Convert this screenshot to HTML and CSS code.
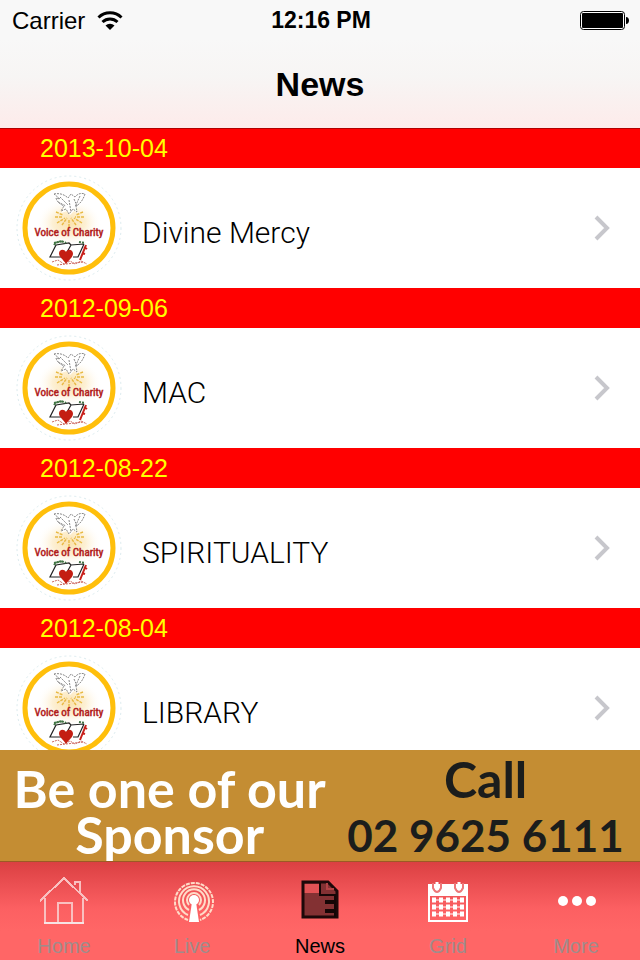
FILE: index.html
```html
<!DOCTYPE html>
<html lang="en">
<head>
<meta charset="utf-8">
<meta name="viewport" content="width=device-width, initial-scale=1">
<title>News</title>
<link rel="stylesheet" href="styles.css">
</head>
<body>
<svg class="defs" aria-hidden="true">
  <defs>
    <radialGradient id="glow">
      <stop offset="0" stop-color="#fbe2ac"/>
      <stop offset="0.5" stop-color="#fdf0d4"/>
      <stop offset="1" stop-color="#fff" stop-opacity="0"/>
    </radialGradient>
    <symbol id="logo" viewBox="0 -1 110 110">
      <circle cx="53" cy="54" r="52" fill="none" stroke="#dcecef" stroke-dasharray="2 3"/>
      <circle cx="53" cy="54" r="44" fill="#fff" stroke="#ffbf0b" stroke-width="5"/>
      <ellipse cx="53" cy="49" rx="33" ry="24" fill="url(#glow)"/>
      <g fill="none" stroke="#e8b943" stroke-width="1.4" stroke-dasharray="3 1">
        <path d="M40 38 47 41M39 43 47 43M41 49 49 44M46 51 51 44M53 53V45M60 51 55 44M66 49 58 44M68 43 59 43M67 38 60 41"/>
      </g>
      <path d="M39 20c4-1 9 1 13 4l4-4 4 2c3-3 8-3 10 0-2 7-5 10-10 12l2 5-4-2-4 4-3-4-6 2 3-5c-5-2-8-5-9-14z" fill="#fff"/>
      <path d="M38 20c5-1 10 0 14 4l3-4 4 3c3-4 7-4 10-3-2 6-5 10-9 12l1 6-4-3-4 5-3-5-5 2 3-5c-4-2-7-4-8-8l4 1-6-5M44 23l8 8M42 28l8 4M58 25l3 7M64 22l-5 11M53 26l2 12" fill="none" stroke="#888" stroke-width="1" stroke-dasharray="2 1"/>
      <path d="M40 71 53 69 55 71 68 70 61 85 37 85 34 83z" fill="#fff"/>
      <path d="M40 71 53 69 55 71 68 70M40 71 34 83 47 83M55 71 50 80M68 70 62 83H57" fill="none" stroke="#222" stroke-width="1.2"/>
      <path d="M70 71 64 86M68 73l3 2M66 79l3 1" fill="none" stroke="#c8201b" stroke-width="2"/>
      <path d="M38 71c4-5 9-4 12-2M38 69l9-2M63 68l6 1" fill="none" stroke="#417445" stroke-width="2" stroke-dasharray="2 1"/>
      <path d="M36 88 42 86 48 90 54 87 59 90 65 87 71 90M41 91 68 88" fill="none" stroke="#cc6760" stroke-dasharray="2 1"/>
      <path d="M50 90C47 85 43 83 43 79.500c0-4 5-5 7-1.500 2-4 7-2 7 1.500 0 4-4 6-7 10.500z" fill="#c41e13"/>
      <text class="logo-text" x="53" y="62" text-anchor="middle">Voice of Charity</text>
    </symbol>
    <symbol id="chevron" viewBox="0 0 18 26">
      <path d="M2 2 13 13 2 24" fill="none" stroke="#c7c7cc" stroke-width="4"/>
    </symbol>
  </defs>
</svg>

<header class="top">
  <div class="status">
    <span class="carrier">Carrier
      <svg class="wifi" viewBox="0 0 26 20" aria-hidden="true">
        <path d="M1.500 6.500a16.500 16.500 0 0 1 23 0" fill="none" stroke="#000" stroke-width="3"/>
        <path d="M5.500 11a11 11 0 0 1 15 0" fill="none" stroke="#000" stroke-width="3"/>
        <path d="M8.500 14.500a6.500 6.500 0 0 1 9 0L13 19z"/>
      </svg>
    </span>
    <span class="time">12:16 PM</span>
    <svg class="battery" viewBox="0 0 50 20" aria-hidden="true">
      <rect x="0.500" y="0.500" width="44" height="18" rx="3" fill="#fff" stroke="#000"/>
      <rect x="2" y="2" width="41" height="15" rx="1"/>
      <path d="M46 6c4 0 4 7 0 7z"/>
    </svg>
  </div>
  <h1 class="title">News</h1>
</header>

<main class="list">
  <section>
    <h2 class="date">2013-10-04</h2>
    <a class="row" href="#divine-mercy"><svg class="logo" aria-hidden="true"><use href="#logo"/></svg><span class="name">Divine Mercy</span><svg class="chevron" aria-hidden="true"><use href="#chevron"/></svg></a>
  </section>
  <section>
    <h2 class="date">2012-09-06</h2>
    <a class="row" href="#mac"><svg class="logo" aria-hidden="true"><use href="#logo"/></svg><span class="name">MAC</span><svg class="chevron" aria-hidden="true"><use href="#chevron"/></svg></a>
  </section>
  <section>
    <h2 class="date">2012-08-22</h2>
    <a class="row" href="#spirituality"><svg class="logo" aria-hidden="true"><use href="#logo"/></svg><span class="name">SPIRITUALITY</span><svg class="chevron" aria-hidden="true"><use href="#chevron"/></svg></a>
  </section>
  <section>
    <h2 class="date">2012-08-04</h2>
    <a class="row" href="#library"><svg class="logo" aria-hidden="true"><use href="#logo"/></svg><span class="name">LIBRARY</span><svg class="chevron" aria-hidden="true"><use href="#chevron"/></svg></a>
  </section>
</main>

<a class="banner" href="tel:0296256111">
  <span class="pitch">Be one of our<br>Sponsor</span>
  <span class="call"><span class="verb">Call</span><span class="number">02 9625 6111</span></span>
</a>

<nav class="tabs">
  <a class="tab" href="#home">
    <svg class="icon" viewBox="0 0 50 50" aria-hidden="true">
      <g fill="none" stroke="#f9c0c0" stroke-width="2" shape-rendering="crispEdges">
        <path d="M1 26 25 3 49 26M6 23V47M44 23V47M19 47V28H33V47M36 10V7H41V17"/>
        <path d="M5 48H45" stroke="#f6e4e4"/>
      </g>
    </svg>
    Home
  </a>
  <a class="tab" href="#live">
    <svg class="icon" viewBox="-2 1 50 50" aria-hidden="true">
      <g fill="none" stroke="#ffdcc8" stroke-width="2">
        <path d="M19 46A19 19 0 1 1 31 46" stroke-dasharray="4 1"/>
        <path d="M19 41A15 15 0 1 1 31 41"/>
        <path d="M20 36A11 11 0 1 1 30 36"/>
        <path d="M20 31A7 7 0 1 1 30 31"/>
      </g>
      <circle cx="25" cy="26" r="5" fill="#fff"/>
      <path d="M23 28H27L30 48H20z" fill="#fff"/>
    </svg>
    Live
  </a>
  <a class="tab current" href="#news" aria-current="page">
    <svg class="icon" viewBox="0 0 50 50" aria-hidden="true">
      <path d="M8 7H33L42 16V42H8z" fill="#833133"/>
      <path d="M9 9H25V18H9z" fill="#e25255"/>
      <path d="M8 7H33L42 16V42H8z" fill="none" stroke="#1d0809" stroke-width="3"/>
      <path d="M26 8V19H41V42H39V38H30V34H39V29H30V25H39V21H24V8z" fill="#150606"/>
      <path d="M32 8V14H39" fill="none" stroke="#b34346" stroke-width="2"/>
    </svg>
    News
  </a>
  <a class="tab" href="#grid">
    <svg class="icon" viewBox="0 1 50 50" aria-hidden="true">
      <path d="M5 10H45V22H5z" fill="#fff"/>
      <path d="M6 20V47H44V20" fill="none" stroke="#fff" stroke-width="2"/>
      <path d="M10 9V14Q14 22 18 14V9M32 9V14Q36 22 40 14V9" fill="none" stroke="#ed7778" stroke-width="2"/>
      <path d="M14 8V16M36 8V16" stroke="#fff" stroke-width="3"/>
      <path d="M9 26H41M9 33H41M9 40H41" stroke="#fff" stroke-width="5" stroke-dasharray="4 3"/>
      <path d="M9 26H41M9 33H41M9 40H41" stroke="#fff" stroke-width="1"/>
    </svg>
    Grid
  </a>
  <a class="tab" href="#more">
    <svg class="icon" viewBox="-1 1 50 50" aria-hidden="true">
      <g fill="#fff"><circle cx="11" cy="27" r="5"/><circle cx="25" cy="27" r="5"/><circle cx="39" cy="27" r="5"/></g>
    </svg>
    More
  </a>
</nav>
</body>
</html>
```
FILE: styles.css
```css
* { box-sizing: border-box; }

body {
  margin: 0;
  height: 100vh;
  display: flex;
  flex-direction: column;
  background: #fff;
  color: #000;
  font-family: "Liberation Sans", Arial, sans-serif;
}

a { color: inherit; text-decoration: none; }
svg { display: block; flex: none; }
.defs { position: absolute; width: 0; height: 0; }

.top {
  flex: none;
  background: linear-gradient(#f8f8f8 0, #f8f8f8 30%, #f7f5f4 60%, #fdebea 100%);
}

.status {
  display: grid;
  grid-template-columns: 1fr auto 1fr;
  align-items: center;
  height: 41px;
  padding: 0 10px 0 12px;
  font-size: 24px;
}

.carrier { display: flex; align-items: center; gap: 12px; }
.wifi { width: 26px; height: 20px; }
.time { font-size: 23px; font-weight: 700; }
.battery { width: 50px; height: 20px; justify-self: end; }

.title {
  margin: 0;
  height: 87px;
  font-size: 34px;
  line-height: 87px;
  text-align: center;
}

.list {
  flex: 1;
  min-height: 0;
  overflow: hidden;
}

.date {
  margin: 0;
  padding: 0 40px;
  background: #f00;
  color: #ff0;
  font-size: 25px;
  font-weight: 400;
  line-height: 40px;
}

section:first-child .date { box-shadow: inset 0 1px #b20000; }

.row {
  display: flex;
  align-items: center;
  height: 120px;
  padding: 0 28px 0 16px;
}

.logo { width: 110px; height: 110px; }
.logo-text {
  fill: #b01c1c;
  stroke: #b01c1c;
  stroke-width: 0.5px;
  font-family: "Roboto Condensed", "Liberation Sans", sans-serif;
  font-size: 11px;
}

.name {
  flex: 1;
  padding: 8px 0 0 16px;
  font-family: Roboto, "Liberation Sans", sans-serif;
  font-size: 30px;
  font-weight: 300;
}

.chevron { width: 18px; height: 26px; }

.banner {
  flex: none;
  display: grid;
  grid-template-columns: 53fr 47fr;
  height: 111px;
  overflow: hidden;
  background: #c48d33;
  font-family: Lato, "Liberation Sans", sans-serif;
  font-weight: 700;
  text-align: center;
  white-space: nowrap;
}

.pitch { padding-top: 15px; color: #fff; font-size: 52px; line-height: 46px; }
.call { display: flex; flex-direction: column; color: #1b1d1c; line-height: 56px; padding-right: 8px; padding-top: 1px; }
.verb { font-size: 50px; }
.number { font-size: 44px; }

.tabs {
  flex: none;
  display: grid;
  grid-template-columns: repeat(5, 1fr);
  height: 99px;
  border-top: 1px solid #9c5a24;
  background: linear-gradient(#db4042 0, #ec5053 24%, #fc6062 48%, #ff6666 70%);
}

.tab {
  display: flex;
  flex-direction: column;
  align-items: center;
  gap: 9px;
  padding-top: 13px;
  color: #a08c8c;
  font-size: 20px;
  line-height: 24px;
}

.current { color: #000; }
.icon { width: 50px; height: 50px; }
```
